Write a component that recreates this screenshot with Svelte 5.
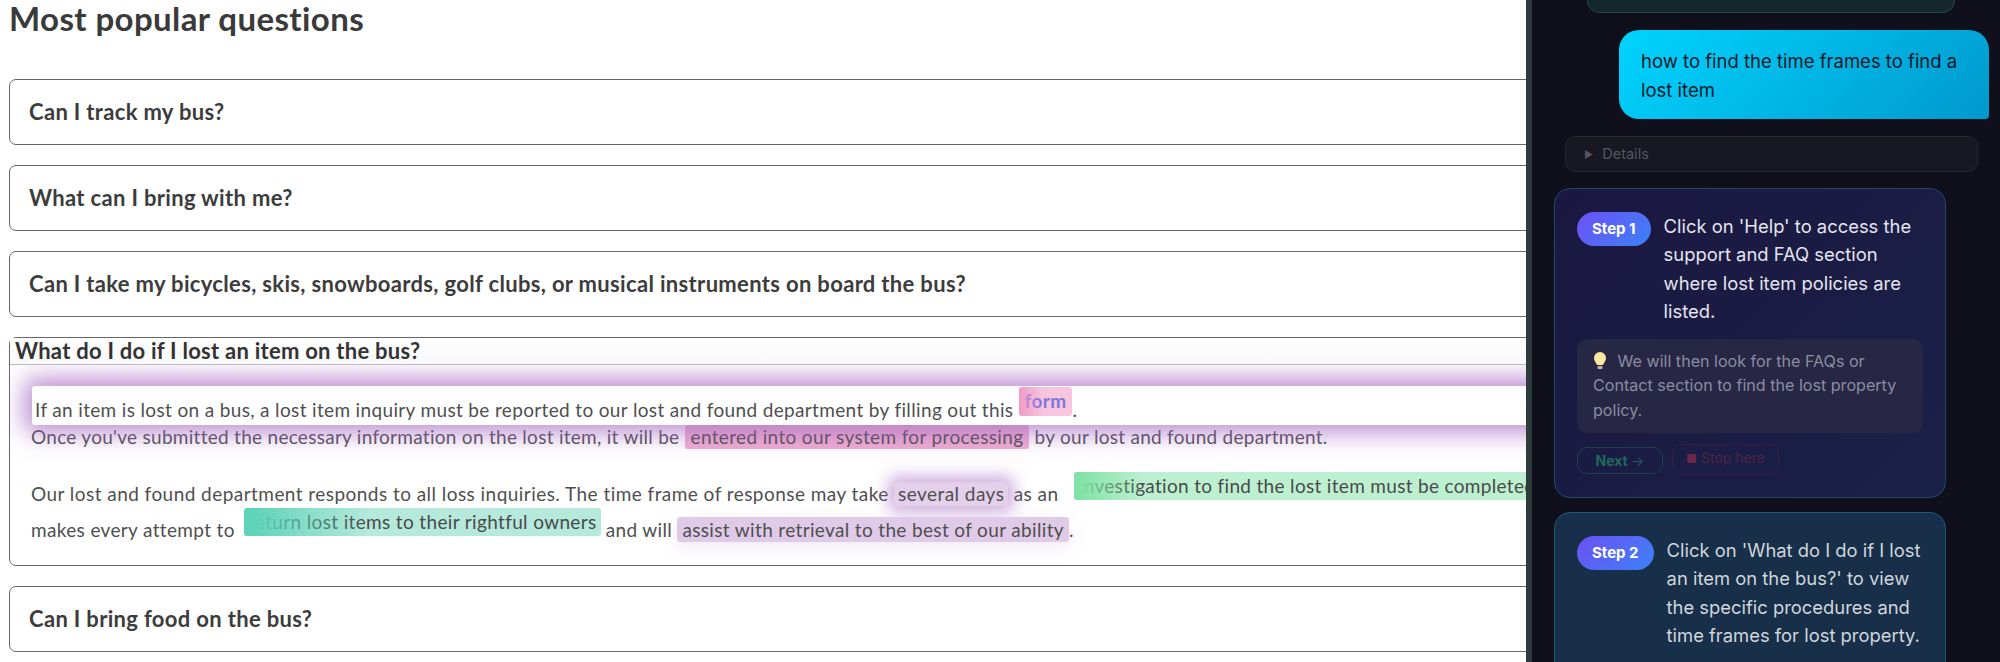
<script>
  const before = ["Can I track my bus?", "What can I bring with me?", "Can I take my bicycles, skis, snowboards, golf clubs, or musical instruments on board the bus?"];
</script>

<div class="page">
  <main class="faq">
    <h1>Most popular questions</h1>
    <div class="list">
      {#each before as q}
        <div class="card"><span class="q">{q}</span></div>
      {/each}

      <div class="card open">
        <div class="head">What do I do if I lost an item on the bus?</div>
        <div class="body">
          <div class="spot">If an item is lost on a bus, a lost item inquiry must be reported to our lost and found department by filling out this <span class="pill form">form</span>.</div>
          <div class="line tight">Once you've submitted the necessary information on the lost item, it will be <span class="pill pink">entered into our system for processing</span> by our lost and found department.</div>
          <div class="line third">Our lost and found department responds to all loss inquiries. The time frame of response may take <span class="pill days">several days</span> as an <span class="pill green">investigation to find the lost item must be completed</span></div>
          <div class="line fourth">makes every attempt to <span class="pill teal">return lost items to their rightful owners</span> and will <span class="pill assist">assist with retrieval to the best of our ability</span>.</div>
        </div>
      </div>

      <div class="card"><span class="q">Can I bring food on the bus?</span></div>
    </div>
  </main>

  <aside class="chat">
    <div class="prev"></div>
    <div class="user">how to find the time frames to find a lost item</div>
    <div class="details"><span class="tri">►</span> Details</div>

    <section class="step first">
      <div class="top">
        <span class="badge">Step 1</span>
        <p>Click on 'Help' to access the support and FAQ section where lost item policies are listed.</p>
      </div>
      <div class="note">
        <svg class="bulb" viewBox="0 0 14 20" width="14" height="20">
          <path d="M7 1a6 6 0 0 0-6 6c0 2.6 1.7 3.9 2.6 6.2.2.5.5.8 1 .8h4.800c.5 0 .8-.3 1-.8C11.300 10.900 13 9.600 13 7a6 6 0 0 0-6-6z" fill="#fbe7a0" />
          <rect x="4.500" y="15" width="5" height="3" rx="1" fill="#b9b6ac" />
        </svg>
        We will then look for the FAQs or Contact section to find the lost property policy.
      </div>
      <div class="actions">
        <button class="next">Next <span class="arrow">→</span></button>
        <button class="stop"><span class="sq">■</span> Stop here</button>
      </div>
    </section>

    <section class="step second">
      <div class="top">
        <span class="badge">Step 2</span>
        <p>Click on 'What do I do if I lost an item on the bus?' to view the specific procedures and time frames for lost property.</p>
      </div>
    </section>
  </aside>
</div>

<style>
  :global(body) {
    margin: 0;
    background: #fff;
  }

  .page {
    display: flex;
    width: 2000px;
    height: 662px;
    overflow: hidden;
  }

  .faq {
    flex: 0 0 1526px;
    overflow: hidden;
    font-family: Lato, "Open Sans", sans-serif;
    color: #333;
  }

  h1 {
    margin: 0;
    padding: 0 0 0 9px;
    height: 79px;
    box-sizing: border-box;
    font-size: 33px;
    letter-spacing: 0.4px;
    line-height: 36px;
    font-weight: 700;
    color: #3a3a3a;
  }

  .list {
    display: flex;
    flex-direction: column;
    gap: 20px;
    width: 1800px;
    margin-left: 9px;
  }

  .card {
    box-sizing: border-box;
    height: 66px;
    border: 1.5px solid #666;
    border-radius: 7px;
    padding: 0 0 2px 19px;
    display: flex;
    align-items: center;
    background: #fff;
  }

  .q {
    font-size: 22px;
    letter-spacing: 0.33px;
    font-weight: 700;
    color: #3c3c3c;
  }

  .open {
    display: block;
    height: 229px;
    padding: 0;
  }

  .head {
    height: 27px;
    box-sizing: border-box;
    padding: 1px 0 0 5px;
    line-height: 24px;
    font-size: 22px;
    letter-spacing: 0.25px;
    font-weight: 700;
    color: #333;
    border-bottom: 1px solid #bbb;
    background: linear-gradient(#fff, #f9f8fa);
  }

  .body {
    padding: 21px 0 0 21px;
    height: 200px;
    overflow: hidden;
    font-size: 19px;
    letter-spacing: 0.35px;
    color: #4f4f4f;
    white-space: nowrap;
  }

  .spot {
    position: relative;
    z-index: 1;
    height: 39px;
    box-sizing: border-box;
    margin-left: 1px;
    padding: 12px 0 3px 3px;
    line-height: 24px;
    background: #fff;
    border-radius: 3px 0 0 3px;
    box-shadow: 0 0 24px 8px rgba(165, 105, 195, 0.75);
  }

  .line {
    height: 24px;
    line-height: 24px;
  }

  .tight {
    letter-spacing: 0.28px;
  }

  .third {
    margin-top: 33px;
    letter-spacing: 0.45px;
  }

  .fourth {
    margin-top: 11px;
    height: 25px;
    line-height: 25px;
  }

  .pill {
    position: relative;
    display: inline-block;
    padding: 0 5px;
    border-radius: 3px;
    line-height: 24px;
  }

  .pill::after {
    content: "";
    position: absolute;
    inset: 0;
    border-radius: inherit;
  }

  .form {
    padding: 2.500px 6px;
    margin: -2.500px 0;
    transform: translateY(-9px);
    background: #f7c5dd;
    color: #7b78dd;
    font-weight: 700;
  }

  .form::after {
    background: linear-gradient(to right, rgba(240, 150, 195, 0.9), rgba(240, 150, 195, 0) 45%);
  }

  .pink {
    padding: 0 6px;
    letter-spacing: 0.35px;
    background: #efaed2;
    color: #4e4e4e;
  }

  .days {
    padding: 0 4px;
    background: #e4d0ea;
    box-shadow: 0 0 16px 6px rgba(165, 105, 195, 0.55);
  }

  .green {
    padding: 2px 60px 2px 5px;
    margin: -2px 0 -2px 10px;
    transform: translateY(-8px);
    letter-spacing: 0.32px;
    background: #bdf0d1;
    color: #4a4a4a;
  }

  .green::after {
    background: linear-gradient(to right, #82e3a6 3%, rgba(130, 227, 166, 0) 27%);
    width: 260px;
  }

  .teal {
    padding: 2px 4px;
    margin: -2px 0 -2px 4px;
    transform: translateY(-8px);
    background: #b5e9dc;
    color: #4a4a4a;
  }

  .teal::after {
    background: linear-gradient(to right, #60d4b9 3%, rgba(96, 212, 185, 0) 35%);
  }

  .assist {
    background: #dfcae8;
    line-height: 25px;
    box-shadow: 0 6px 18px rgba(165, 105, 195, 0.14);
  }

  .chat {
    flex: 0 0 474px;
    box-sizing: border-box;
    border-left: 6px solid #2c3a3b;
    background: #10101c;
    font-family: Inter, "Liberation Sans", sans-serif;
    position: relative;
    overflow: hidden;
  }

  .prev {
    box-sizing: border-box;
    height: 13px;
    width: 368px;
    margin-left: 55px;
    border: 1px solid #1f4a40;
    border-top: 0;
    border-radius: 0 0 20px 20px;
    background: #14282b;
  }

  .user {
    box-sizing: border-box;
    width: 370px;
    height: 89px;
    margin: 17px 0 0 87px;
    padding: 17px 22px;
    border-radius: 20px 20px 4px 20px;
    background: linear-gradient(135deg, #00d4ff, #0099cc);
    color: #10182a;
    font-size: 18.500px;
    line-height: 28.500px;
  }

  .details {
    box-sizing: border-box;
    width: 413px;
    height: 36px;
    margin: 17px 0 0 33px;
    padding-left: 18px;
    border: 1px solid #25252f;
    border-radius: 10px;
    background: #181822;
    color: #55555f;
    font-size: 14.500px;
    line-height: 34px;
  }

  .tri {
    font-size: 10px;
    margin-right: 5px;
    vertical-align: 1px;
  }

  .step {
    box-sizing: border-box;
    width: 392px;
    margin-left: 22px;
    padding: 23px 22px 0;
    border: 1px solid #1f4a6e;
    border-radius: 16px;
  }

  .first {
    height: 310px;
    margin-top: 16px;
    background: linear-gradient(135deg, #1b1740, #1a2148);
  }

  .second {
    height: 200px;
    margin-top: 14px;
    background: #172f48;
    border-color: #1c5a78;
  }

  .top {
    display: flex;
    align-items: flex-start;
    gap: 13px;
  }

  .badge {
    flex: none;
    box-sizing: border-box;
    height: 34px;
    padding: 0 15px;
    border-radius: 17px;
    background: linear-gradient(135deg, #6d50f6, #3b82f6);
    color: #fff;
    font-size: 15px;
    font-weight: 700;
    line-height: 34px;
  }

  .top p {
    margin: 0;
    font-size: 18.400px;
    line-height: 28.400px;
    color: #e4e4ee;
  }

  .second .top p {
    color: #d0d5dc;
  }

  .note {
    box-sizing: border-box;
    height: 94px;
    margin-top: 13px;
    padding: 10px 16px;
    border-radius: 10px;
    background: #272745;
    color: #8c8ca0;
    font-size: 16.100px;
    line-height: 24.500px;
  }

  .bulb {
    vertical-align: -4px;
    margin-right: 6px;
  }

  .actions {
    display: flex;
    align-items: flex-end;
    gap: 9px;
    margin-top: 11px;
  }

  button {
    box-sizing: border-box;
    padding: 0;
    background: none;
    border-radius: 10px;
    font-family: inherit;
    font-size: 14px;
  }

  .next {
    width: 86px;
    height: 27px;
    border: 1px solid #1f4050;
    color: #1f6a5a;
    font-weight: 700;
  }

  .arrow {
    font-weight: 400;
    color: #25555a;
  }

  .stop {
    width: 107px;
    height: 31px;
    margin-bottom: -1px;
    padding-bottom: 3px;
    border: 1px solid #3a1f45;
    color: #4f2546;
  }

  .sq {
    color: #6a2848;
    font-size: 12px;
  }
</style>
